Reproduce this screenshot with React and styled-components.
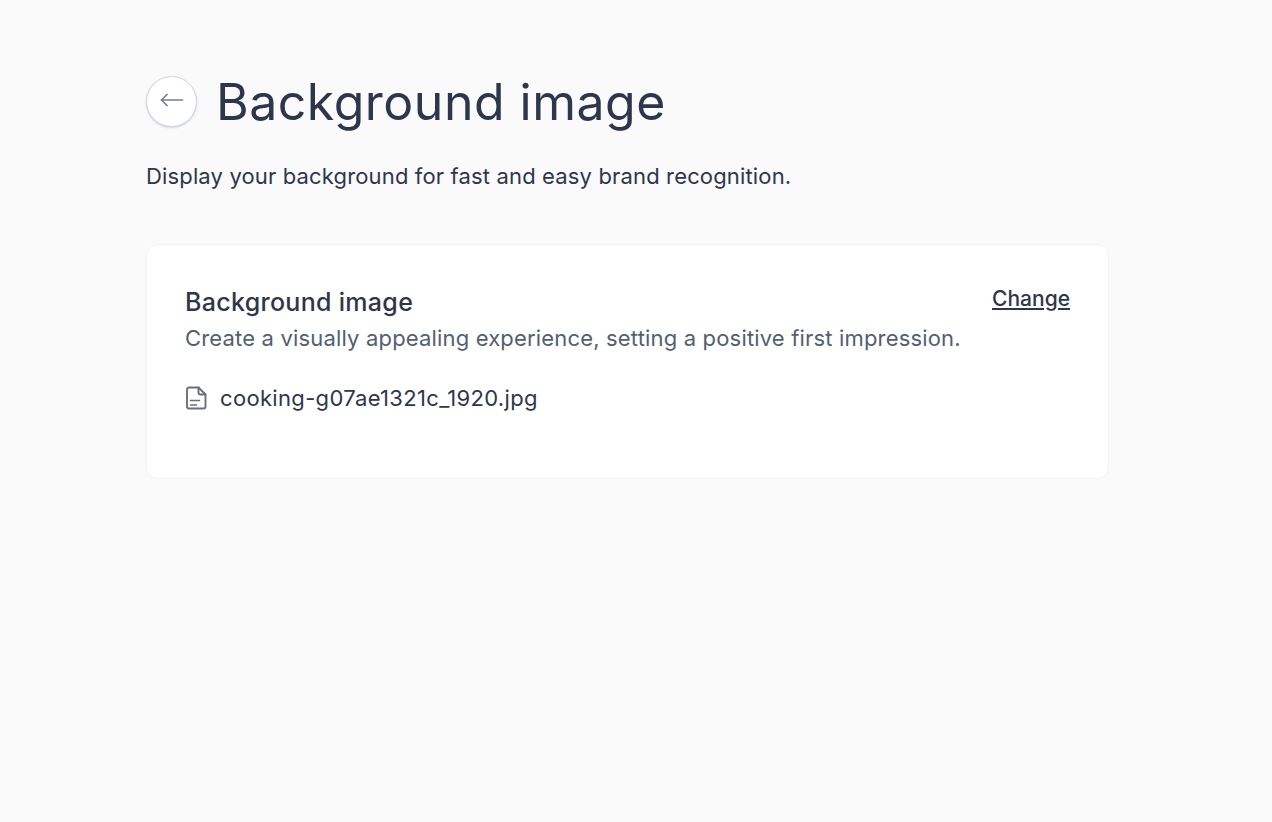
import React from 'react'
import styled, { createGlobalStyle } from 'styled-components'

const GlobalStyle = createGlobalStyle`
  html, body {
    margin: 0;
    padding: 0;
    background: #fafafb;
  }
  body {
    font-family: Inter, "Liberation Sans", sans-serif;
    color: #2e364d;
  }
`

const Page = styled.div`
  box-sizing: border-box;
  width: 1272px;
  height: 822px;
  padding: 70px 163px 0 146px;
  display: flex;
  flex-direction: column;
`

const Header = styled.div`
  display: flex;
  align-items: center;
  gap: 20px;
  height: 64px;
`

const BackButton = styled.button`
  box-sizing: border-box;
  width: 51px;
  height: 51px;
  margin-top: -2px;
  padding: 0 0 2px;
  border-radius: 50%;
  border: 1px solid #cfd5e4;
  background: #fff;
  box-shadow: 0 1px 2px rgba(46, 54, 77, 0.2);
  display: flex;
  align-items: center;
  justify-content: center;
`

const Title = styled.h1`
  margin: 0 0 0 -1px;
  font-size: 50px;
  line-height: 64px;
  font-weight: 400;
  letter-spacing: 0.5px;
  color: #2e364d;
`

const Subtitle = styled.p`
  margin: 26px 0 0;
  font-size: 22px;
  line-height: 32px;
  letter-spacing: 0.15px;
  color: #2e364d;
`

const Card = styled.section`
  box-sizing: border-box;
  margin-top: 52px;
  height: 235px;
  padding: 41px 38px 0;
  background: #fff;
  border: 1px solid #f2f3f6;
  border-radius: 12px;
`

const CardTop = styled.div`
  display: flex;
  justify-content: space-between;
  align-items: flex-start;
`

const CardTitle = styled.h2`
  margin: 0;
  font-size: 25px;
  line-height: 32px;
  font-weight: 500;
  letter-spacing: 0.3px;
  color: #2e364d;
`

const CardText = styled.p`
  margin: 4px 0 0;
  font-size: 22px;
  line-height: 32px;
  letter-spacing: 0.17px;
  color: #526072;
`

const ChangeLink = styled.a`
  margin-top: -1px;
  font-size: 21px;
  line-height: 28px;
  font-weight: 500;
  color: #2e364d;
  text-decoration: underline;
`

const FileRow = styled.div`
  display: flex;
  align-items: center;
  gap: 13px;
  margin-top: 28px;
`

const FileName = styled.span`
  font-size: 22px;
  line-height: 32px;
  letter-spacing: 0.33px;
  color: #2e364d;
`

export default function App() {
  return (
    <>
      <GlobalStyle />
      <Page>
        <Header>
          <BackButton aria-label="Back">
            <svg width="26" height="16" viewBox="0 0 26 16" fill="none" stroke="#767c95" strokeWidth="1.7" strokeLinecap="round" strokeLinejoin="round">
              <path d="M2.5 8h21" />
              <path d="M8 2.5 2.5 8 8 13.5" />
            </svg>
          </BackButton>
          <Title>Background image</Title>
        </Header>
        <Subtitle>Display your background for fast and easy brand recognition.</Subtitle>
        <Card>
          <CardTop>
            <div>
              <CardTitle>Background image</CardTitle>
              <CardText>Create a visually appealing experience, setting a positive first impression.</CardText>
            </div>
            <ChangeLink href="#">Change</ChangeLink>
          </CardTop>
          <FileRow>
            <svg width="22" height="24" viewBox="0 0 22 24" fill="none" stroke="#6b6f80" strokeWidth="1.9" strokeLinecap="round" strokeLinejoin="round">
              <path d="M13.5 1.5H4a2 2 0 0 0-2 2v17a2 2 0 0 0 2 2h14.5a2 2 0 0 0 2-2V8.5z" />
              <path d="M13.5 1.5v5a2 2 0 0 0 2 2h5" />
              <path d="M5.5 14.5h9M5.5 19h6" strokeWidth="1.6" />
            </svg>
            <FileName>cooking-g07ae1321c_1920.jpg</FileName>
          </FileRow>
        </Card>
      </Page>
    </>
  )
}
